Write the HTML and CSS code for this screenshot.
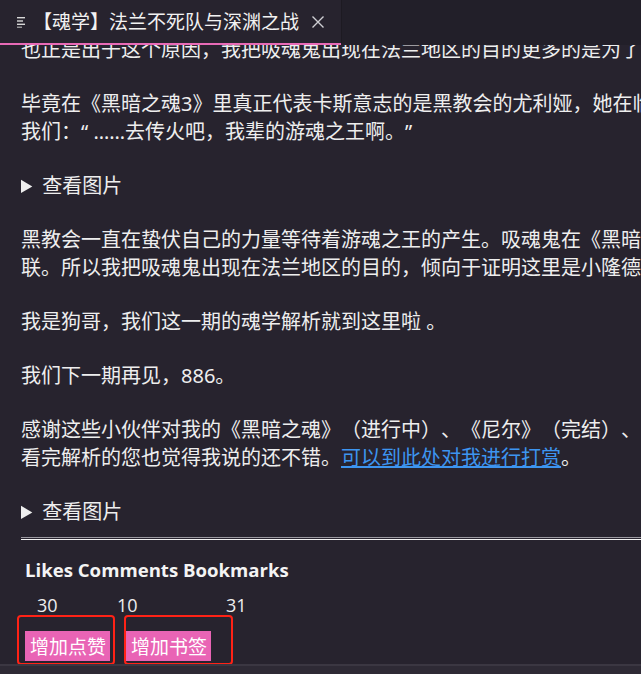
FILE: index.html
```html
<!DOCTYPE html>
<html lang="zh-CN">
<head>
<meta charset="utf-8">
<title>【魂学】法兰不死队与深渊之战</title>
<link rel="stylesheet" href="styles.css">
</head>
<body>
<header class="tabbar">
  <div class="tab">
    <svg class="tab-icon" width="10" height="12" viewBox="0 0 10 12">
      <rect x="0" y="1" width="8" height="1.4" fill="#d8d8d8"/>
      <rect x="0" y="4.3" width="6" height="1.4" fill="#d8d8d8"/>
      <rect x="0" y="7.6" width="8" height="1.4" fill="#d8d8d8"/>
      <rect x="0" y="10.6" width="5" height="1.2" fill="#b0b0b0"/>
    </svg>
    <span class="tab-title">【魂学】法兰不死队与深渊之战</span>
    <svg class="tab-close" width="14" height="14" viewBox="0 0 14 14">
      <path d="M1.5 1.5 L12.5 12.5 M12.5 1.5 L1.5 12.5" stroke="#cfcfd4" stroke-width="1.4" fill="none"/>
    </svg>
  </div>
  <div class="tabbar-rest"></div>
</header>

<main class="article">
  <p>也正是出于这个原因，我把吸魂鬼出现在法兰地区的目的更多的是为了寻找游魂之王。</p>
  <p>毕竟在《黑暗之魂3》里真正代表卡斯意志的是黑教会的尤利娅，她在临死之前告诉<br>我们：“ ……去传火吧，我辈的游魂之王啊。”</p>
  <details class="pics"><summary>查看图片</summary></details>
  <p>黑教会一直在蛰伏自己的力量等待着游魂之王的产生。吸魂鬼在《黑暗之魂》中与黑教会有着密切的关<br>联。所以我把吸魂鬼出现在法兰地区的目的，倾向于证明这里是小隆德的后裔。</p>
  <p>我是狗哥，我们这一期的魂学解析就到这里啦 。</p>
  <p>我们下一期再见，886。</p>
  <p>感谢这些小伙伴对我的《黑暗之魂》（进行中）、《尼尔》（完结）、《只狼》的支持，如果<br>看完解析的您也觉得我说的还不错。<a class="reward" href="#">可以到此处对我进行打赏</a>。</p>
  <details class="pics last"><summary>查看图片</summary></details>
  <hr class="divider">
  <section class="stats">
    <div class="stats-head">Likes Comments Bookmarks</div>
    <div class="stats-nums">
      <span class="num n-likes">30</span>
      <span class="num n-comments">10</span>
      <span class="num n-bookmarks">31</span>
    </div>
    <div class="actions">
      <div class="action-box box-like"><button class="action-btn">增加点赞</button></div>
      <div class="action-box box-mark"><button class="action-btn">增加书签</button></div>
    </div>
  </section>
</main>
<div class="hscroll"></div>
</body>
</html>
```
FILE: styles.css
```css
html, body {
  margin: 0;
  padding: 0;
  background: #27232e;
  overflow: hidden;
  height: 674px;
}
body {
  font-family: "Noto Sans", "Noto Sans CJK SC", sans-serif;
  color: #eeeeee;
  text-spacing-trim: space-all;
}
.tabbar {
  position: fixed;
  top: 0;
  left: 0;
  right: 0;
  height: 45px;
  display: flex;
  z-index: 5;
  background: #221f29;
}
.tab {
  width: 341px;
  height: 43px;
  border-bottom: 2px solid #e86ab6;
  background: #27232e;
  display: flex;
  align-items: center;
  box-sizing: content-box;
}
.tab-icon {
  margin-left: 17px;
  margin-top: 1px;
}
.tab-title {
  margin-left: 6px;
  font-family: "Noto Sans CJK SC", sans-serif;
  font-size: 19px;
  color: #f2f2f2;
  white-space: nowrap;
  line-height: 1;
  margin-top: -2px;
}
.tab-close {
  margin-left: 12px;
}
.tabbar-rest {
  flex: 1;
  height: 43px;
  border-left: 1px solid #1d1a22;
}
.article {
  padding: 36px 0 0 21px;
  width: 1000px;
  font-size: 20px;
  line-height: 28px;
}
.article p {
  margin: 0 0 26px;
  white-space: nowrap;
}
.pics {
  margin: 0 0 26px;
}
.pics.last {
  margin-bottom: 11px;
}
.pics summary {
  cursor: pointer;
}
.reward {
  color: #3d95f0;
  text-decoration: underline;
}
.divider {
  margin: 0;
  width: 700px;
  border: 0;
  border-top: 1px solid #9c9aa2;
  border-bottom: 1px solid #f2f2f2;
  height: 1px;
}
.stats {
  padding-left: 4px;
}
.stats-head {
  margin-top: 17px;
  font-family: "Open Sans", "Noto Sans", sans-serif;
  font-weight: 700;
  font-size: 18.6px;
  line-height: 26px;
  color: #f4f4f4;
}
.stats-nums {
  display: flex;
  margin-top: 10px;
  font-family: "Open Sans", "Noto Sans", sans-serif;
  font-size: 18px;
  line-height: 24px;
  height: 24px;
}
.num.n-likes { margin-left: 12px; width: 80px; }
.num.n-comments { width: 109px; }
.actions {
  display: flex;
  margin-left: -8px;
  margin-top: -2px;
  gap: 9px;
}
.action-box {
  border: 2.5px solid #ff2216;
  border-radius: 4px;
  height: 50px;
  box-sizing: border-box;
  display: flex;
  align-items: flex-end;
  padding: 0 0 2px 6px;
}
.box-like { width: 98px; }
.box-mark { width: 109px; padding-left: 0; }
.action-btn {
  border: 0;
  margin: 0;
  background: #e964b5;
  color: #ffffff;
  font-family: "Noto Sans CJK SC", sans-serif;
  font-size: 19px;
  line-height: 30px;
  height: 30px;
  padding: 0 4px 0 5px;
  border-radius: 0;
}
.hscroll {
  position: fixed;
  left: 0;
  right: 0;
  bottom: 0;
  height: 8px;
  background: #2e2a35;
  border-top: 2px solid #3b3742;
}
```
